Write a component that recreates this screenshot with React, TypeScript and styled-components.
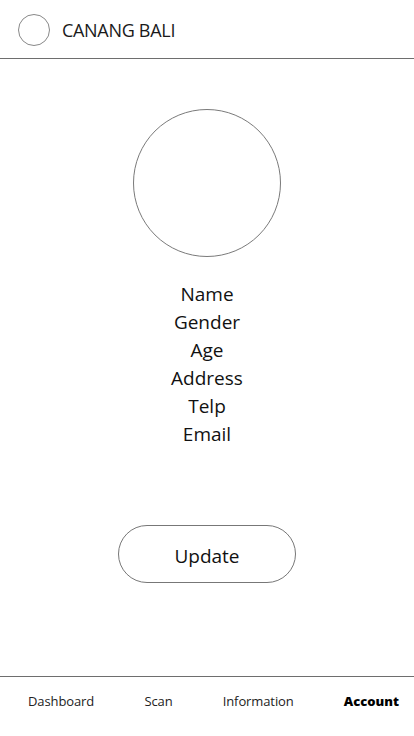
import React from "react";
import styled, { createGlobalStyle } from "styled-components";

const Global = createGlobalStyle`
  html, body { margin: 0; padding: 0; background: #fff; }
  body { font-family: "Open Sans", "Noto Sans", sans-serif; color: #111; }
`;

const Page = styled.div`
  width: 414px;
  height: 736px;
  display: flex;
  flex-direction: column;
  overflow: hidden;
`;

const Header = styled.header`
  height: 59px;
  box-sizing: border-box;
  border-bottom: 1px solid #6e6e6e;
  display: flex;
  align-items: center;
  padding: 1px 0 0 18px;
  gap: 12px;
`;

const Logo = styled.div`
  width: 32px;
  height: 32px;
  box-sizing: border-box;
  border: 1px solid #888;
  border-radius: 50%;
`;

const Title = styled.div`
  font-size: 18px;
  letter-spacing: -0.3px;
  color: #1a1a1a;
`;

const Main = styled.main`
  flex: 1;
  display: flex;
  flex-direction: column;
  align-items: center;
  padding-top: 50px;
`;

const Avatar = styled.div`
  width: 148px;
  height: 148px;
  box-sizing: border-box;
  border: 1px solid #7a7a7a;
  border-radius: 50%;
`;

const InfoList = styled.div`
  margin-top: 23px;
  display: flex;
  flex-direction: column;
  align-items: center;
`;

const InfoLine = styled.div`
  font-size: 19px;
  line-height: 28px;
  color: #111;
`;

const UpdateButton = styled.button`
  margin-top: 77px;
  width: 178px;
  height: 58px;
  box-sizing: border-box;
  border: 1px solid #777;
  border-radius: 29px;
  background: #fff;
  font-family: inherit;
  font-size: 19px;
  color: #111;
  padding: 3px 0 0;
`;

const Nav = styled.nav`
  height: 60px;
  box-sizing: border-box;
  border-top: 1px solid #6e6e6e;
  display: flex;
  justify-content: space-between;
  align-items: flex-start;
  padding: 15px 15px 0 28px;
`;

const NavItem = styled.div<{ $active?: boolean }>`
  font-size: 13px;
  font-weight: ${(p) => (p.$active ? 800 : 400)};
  color: ${(p) => (p.$active ? "#000" : "#222")};
  letter-spacing: ${(p) => (p.$active ? "0" : "-0.1px")};
`;

export default function App() {
  return (
    <Page>
      <Global />
      <Header>
        <Logo />
        <Title>CANANG BALI</Title>
      </Header>
      <Main>
        <Avatar />
        <InfoList>
          {["Name", "Gender", "Age", "Address", "Telp", "Email"].map((t) => (
            <InfoLine key={t}>{t}</InfoLine>
          ))}
        </InfoList>
        <UpdateButton>Update</UpdateButton>
      </Main>
      <Nav>
        <NavItem>Dashboard</NavItem>
        <NavItem>Scan</NavItem>
        <NavItem>Information</NavItem>
        <NavItem $active>Account</NavItem>
      </Nav>
    </Page>
  );
}
